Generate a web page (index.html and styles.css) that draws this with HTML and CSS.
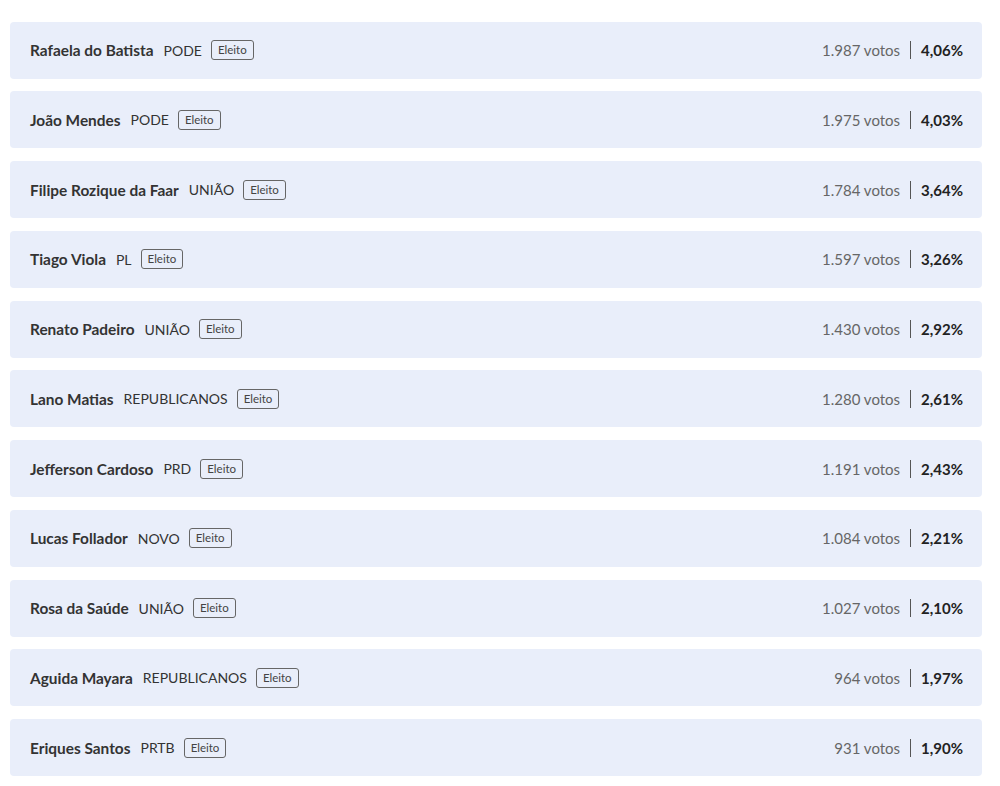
FILE: index.html
```html
<!DOCTYPE html>
<html lang="pt-BR">
<head>
    <meta charset="UTF-8">
    <meta name="viewport" content="width=device-width, initial-scale=1.0">
    <title>Eleitos</title>
    <link rel="stylesheet" href="styles.css">
</head>
<body>
    <ul class="results">
        <li class="row">
            <div class="who"><span class="name">Rafaela do Batista</span><span class="party">PODE</span><span class="badge">Eleito</span></div>
            <div class="score"><span class="votes">1.987 votos</span><span class="pct">4,06%</span></div>
        </li>
        <li class="row">
            <div class="who"><span class="name">João Mendes</span><span class="party">PODE</span><span class="badge">Eleito</span></div>
            <div class="score"><span class="votes">1.975 votos</span><span class="pct">4,03%</span></div>
        </li>
        <li class="row">
            <div class="who"><span class="name">Filipe Rozique da Faar</span><span class="party">UNIÃO</span><span class="badge">Eleito</span></div>
            <div class="score"><span class="votes">1.784 votos</span><span class="pct">3,64%</span></div>
        </li>
        <li class="row">
            <div class="who"><span class="name">Tiago Viola</span><span class="party">PL</span><span class="badge">Eleito</span></div>
            <div class="score"><span class="votes">1.597 votos</span><span class="pct">3,26%</span></div>
        </li>
        <li class="row">
            <div class="who"><span class="name">Renato Padeiro</span><span class="party">UNIÃO</span><span class="badge">Eleito</span></div>
            <div class="score"><span class="votes">1.430 votos</span><span class="pct">2,92%</span></div>
        </li>
        <li class="row">
            <div class="who"><span class="name">Lano Matias</span><span class="party">REPUBLICANOS</span><span class="badge">Eleito</span></div>
            <div class="score"><span class="votes">1.280 votos</span><span class="pct">2,61%</span></div>
        </li>
        <li class="row">
            <div class="who"><span class="name">Jefferson Cardoso</span><span class="party">PRD</span><span class="badge">Eleito</span></div>
            <div class="score"><span class="votes">1.191 votos</span><span class="pct">2,43%</span></div>
        </li>
        <li class="row">
            <div class="who"><span class="name">Lucas Follador</span><span class="party">NOVO</span><span class="badge">Eleito</span></div>
            <div class="score"><span class="votes">1.084 votos</span><span class="pct">2,21%</span></div>
        </li>
        <li class="row">
            <div class="who"><span class="name">Rosa da Saúde</span><span class="party">UNIÃO</span><span class="badge">Eleito</span></div>
            <div class="score"><span class="votes">1.027 votos</span><span class="pct">2,10%</span></div>
        </li>
        <li class="row">
            <div class="who"><span class="name">Aguida Mayara</span><span class="party">REPUBLICANOS</span><span class="badge">Eleito</span></div>
            <div class="score"><span class="votes">964 votos</span><span class="pct">1,97%</span></div>
        </li>
        <li class="row">
            <div class="who"><span class="name">Eriques Santos</span><span class="party">PRTB</span><span class="badge">Eleito</span></div>
            <div class="score"><span class="votes">931 votos</span><span class="pct">1,90%</span></div>
        </li>
    </ul>
</body>
</html>
```

FILE: styles.css
```css
* {margin: 0; padding: 0; box-sizing: border-box;}
body {background-color: #ffffff; color: #333333; font-family: Lato, 'Noto Sans', sans-serif;}
li {list-style-type: none;}

.results {width: 972px; margin-left: 10px; padding-top: 21.5px; display: flex; flex-direction: column; gap: 12.75px;}
.row {height: 57px; background-color: #e9eefa; border-radius: 4px; padding: 0 19px 0 20px; display: flex; justify-content: space-between; align-items: center;}

.who {display: flex; align-items: center;}
.name {font-size: 15.4px; font-weight: 700; color: #333333;}
.party {font-size: 14px; color: #333333; margin-left: 10px;}
.badge {font-size: 11.5px; color: #444444; border: 1px solid #666666; border-radius: 3px; padding: 2px 6px; line-height: 14px; margin-left: 9px;}

.score {display: flex; align-items: center;}
.votes {font-size: 15px; color: #666666; padding-right: 10px; border-right: 1px solid #555555; line-height: 18px;}
.pct {font-size: 15px; font-weight: 700; color: #222222; padding-left: 10px;}
```
